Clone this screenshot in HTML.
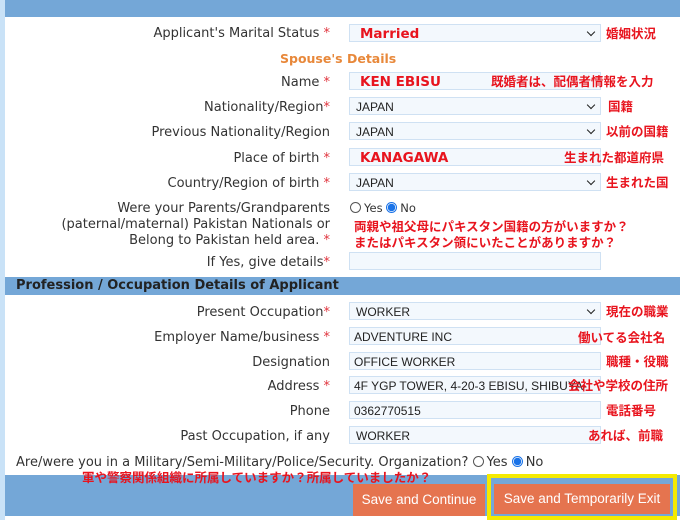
<!DOCTYPE html>
<html><head><meta charset="utf-8"><style>
*{margin:0;padding:0;box-sizing:border-box}
body{width:680px;height:520px;position:relative;background:#fff;overflow:hidden;font-family:"DejaVu Sans","Liberation Sans",sans-serif;font-size:13px;color:#333}
.a{position:absolute;white-space:nowrap}
.lbl{position:absolute;right:350px;text-align:right;white-space:nowrap;color:#333;font-size:13px;margin-top:2px}
.s{color:#e0323c}
.in{position:absolute;left:349px;width:252px;height:18px;border:1px solid #cfe1f3;background:#f3f8fd;font-family:"Liberation Sans",sans-serif;font-size:12px;color:#222;padding-left:6px;line-height:18px}
.in.sel::after{content:"";position:absolute;right:6px;top:4px;width:5px;height:5px;border-right:1.6px solid #222;border-bottom:1.6px solid #222;transform:rotate(45deg)}
.big{font-weight:bold;color:#e8141e;font-size:13.5px;font-family:"DejaVu Sans",sans-serif;padding-left:10px}
.jp{position:absolute;white-space:nowrap;color:#e8141e;font-weight:bold;font-family:"Noto Sans CJK JP",sans-serif;font-size:12.5px;line-height:14px}
.bar{position:absolute;left:5px;right:0;background:#74a7d7}
.btn{position:absolute;background:#e5744f;color:#fff;font-family:"Liberation Sans",sans-serif;font-size:13.5px;text-align:center;line-height:31px}
.rad{display:inline-block;width:11px;height:11px;border:1px solid #555;border-radius:50%;vertical-align:-1px;margin-right:3px;background:#fff}
.rad.on{border:1px solid #1a73e8;background:radial-gradient(circle,#1a73e8 0 3.5px,#fff 4px)}
</style></head><body>
<div class="a" style="left:0;top:0;width:5px;height:520px;background:#c9e2f7"></div>
<div class="bar" style="top:0;height:17px"></div>

<div class="lbl" style="top:24px">Applicant's Marital Status <span class="s">*</span></div>
<div class="in sel big" style="top:24px">Married</div>
<div class="jp" style="left:606px;top:26px">婚姻状況</div>

<div class="a" style="left:280px;top:51px;color:#e8883a;font-weight:bold;font-size:12.5px">Spouse's Details</div>

<div class="lbl" style="top:73px">Name <span class="s">*</span></div>
<div class="in big" style="top:72px">KEN EBISU</div>
<div class="jp" style="left:491px;top:74px">既婚者は、配偶者情報を入力</div>

<div class="lbl" style="top:98px">Nationality/Region<span class="s">*</span></div>
<div class="in sel" style="top:97px">JAPAN</div>
<div class="jp" style="left:608px;top:99px">国籍</div>

<div class="lbl" style="top:123px">Previous Nationality/Region</div>
<div class="in sel" style="top:122px">JAPAN</div>
<div class="jp" style="left:606px;top:124px">以前の国籍</div>

<div class="lbl" style="top:149px">Place of birth <span class="s">*</span></div>
<div class="in big" style="top:148px">KANAGAWA</div>
<div class="jp" style="left:564px;top:150px">生まれた都道府県</div>

<div class="lbl" style="top:174px">Country/Region of birth <span class="s">*</span></div>
<div class="in sel" style="top:173px">JAPAN</div>
<div class="jp" style="left:606px;top:175px">生まれた国</div>

<div class="lbl" style="top:199px;line-height:16px">Were your Parents/Grandparents<br>(paternal/maternal) Pakistan Nationals or<br>Belong to Pakistan held area. <span class="s">*</span></div>
<div class="a" style="left:350px;top:201px;font-size:11.5px"><span class="rad"></span>Yes <span class="rad on"></span>No</div>
<div class="jp" style="left:354px;top:218px;line-height:16px">両親や祖父母にパキスタン国籍の方がいますか？<br>またはパキスタン領にいたことがありますか？</div>

<div class="lbl" style="top:253px">If Yes, give details<span class="s">*</span></div>
<div class="in" style="top:252px"></div>

<div class="bar" style="top:277px;height:18px"></div>
<div class="a" style="left:16px;top:278px;font-weight:bold;color:#222;font-size:13px">Profession / Occupation Details of Applicant</div>

<div class="lbl" style="top:303px">Present Occupation<span class="s">*</span></div>
<div class="in sel" style="top:302px">WORKER</div>
<div class="jp" style="left:606px;top:304px">現在の職業</div>

<div class="lbl" style="top:328px">Employer Name/business <span class="s">*</span></div>
<div class="in" style="top:327px;padding-left:4px">ADVENTURE INC</div>
<div class="jp" style="left:578px;top:330px">働いてる会社名</div>

<div class="lbl" style="top:353px">Designation</div>
<div class="in" style="top:352px;padding-left:4px">OFFICE WORKER</div>
<div class="jp" style="left:606px;top:354px">職種・役職</div>

<div class="lbl" style="top:377px">Address <span class="s">*</span></div>
<div class="in" style="top:376px;padding-left:4px;overflow:hidden">4F YGP TOWER, 4-20-3 EBISU, SHIBUYA-OKY</div>
<div class="jp" style="left:568px;top:378px">会社や学校の住所</div>

<div class="lbl" style="top:402px">Phone</div>
<div class="in" style="top:401px;padding-left:4px">0362770515</div>
<div class="jp" style="left:606px;top:403px">電話番号</div>

<div class="lbl" style="top:427px">Past Occupation, if any</div>
<div class="in" style="top:426px">WORKER</div>
<div class="jp" style="left:588px;top:428px">あれば、前職</div>

<div class="a" style="left:16px;top:455px;font-size:13px">Are/were you in a Military/Semi-Military/Police/Security. Organization? <span class="rad"></span>Yes <span class="rad on"></span>No</div>

<div class="bar" style="top:475px;height:41px"></div>
<div class="jp" style="left:82px;top:470px">軍や警察関係組織に所属していますか？所属していましたか？</div>
<div class="btn" style="left:353px;top:484px;width:132px;height:32px">Save and Continue</div>
<div class="a" style="left:487px;top:474px;width:190px;height:46px;border:4px solid #f5ea00"></div>
<div class="btn" style="left:494px;top:484px;width:176px;height:30px;line-height:30px">Save and Temporarily Exit</div>
</body></html>
